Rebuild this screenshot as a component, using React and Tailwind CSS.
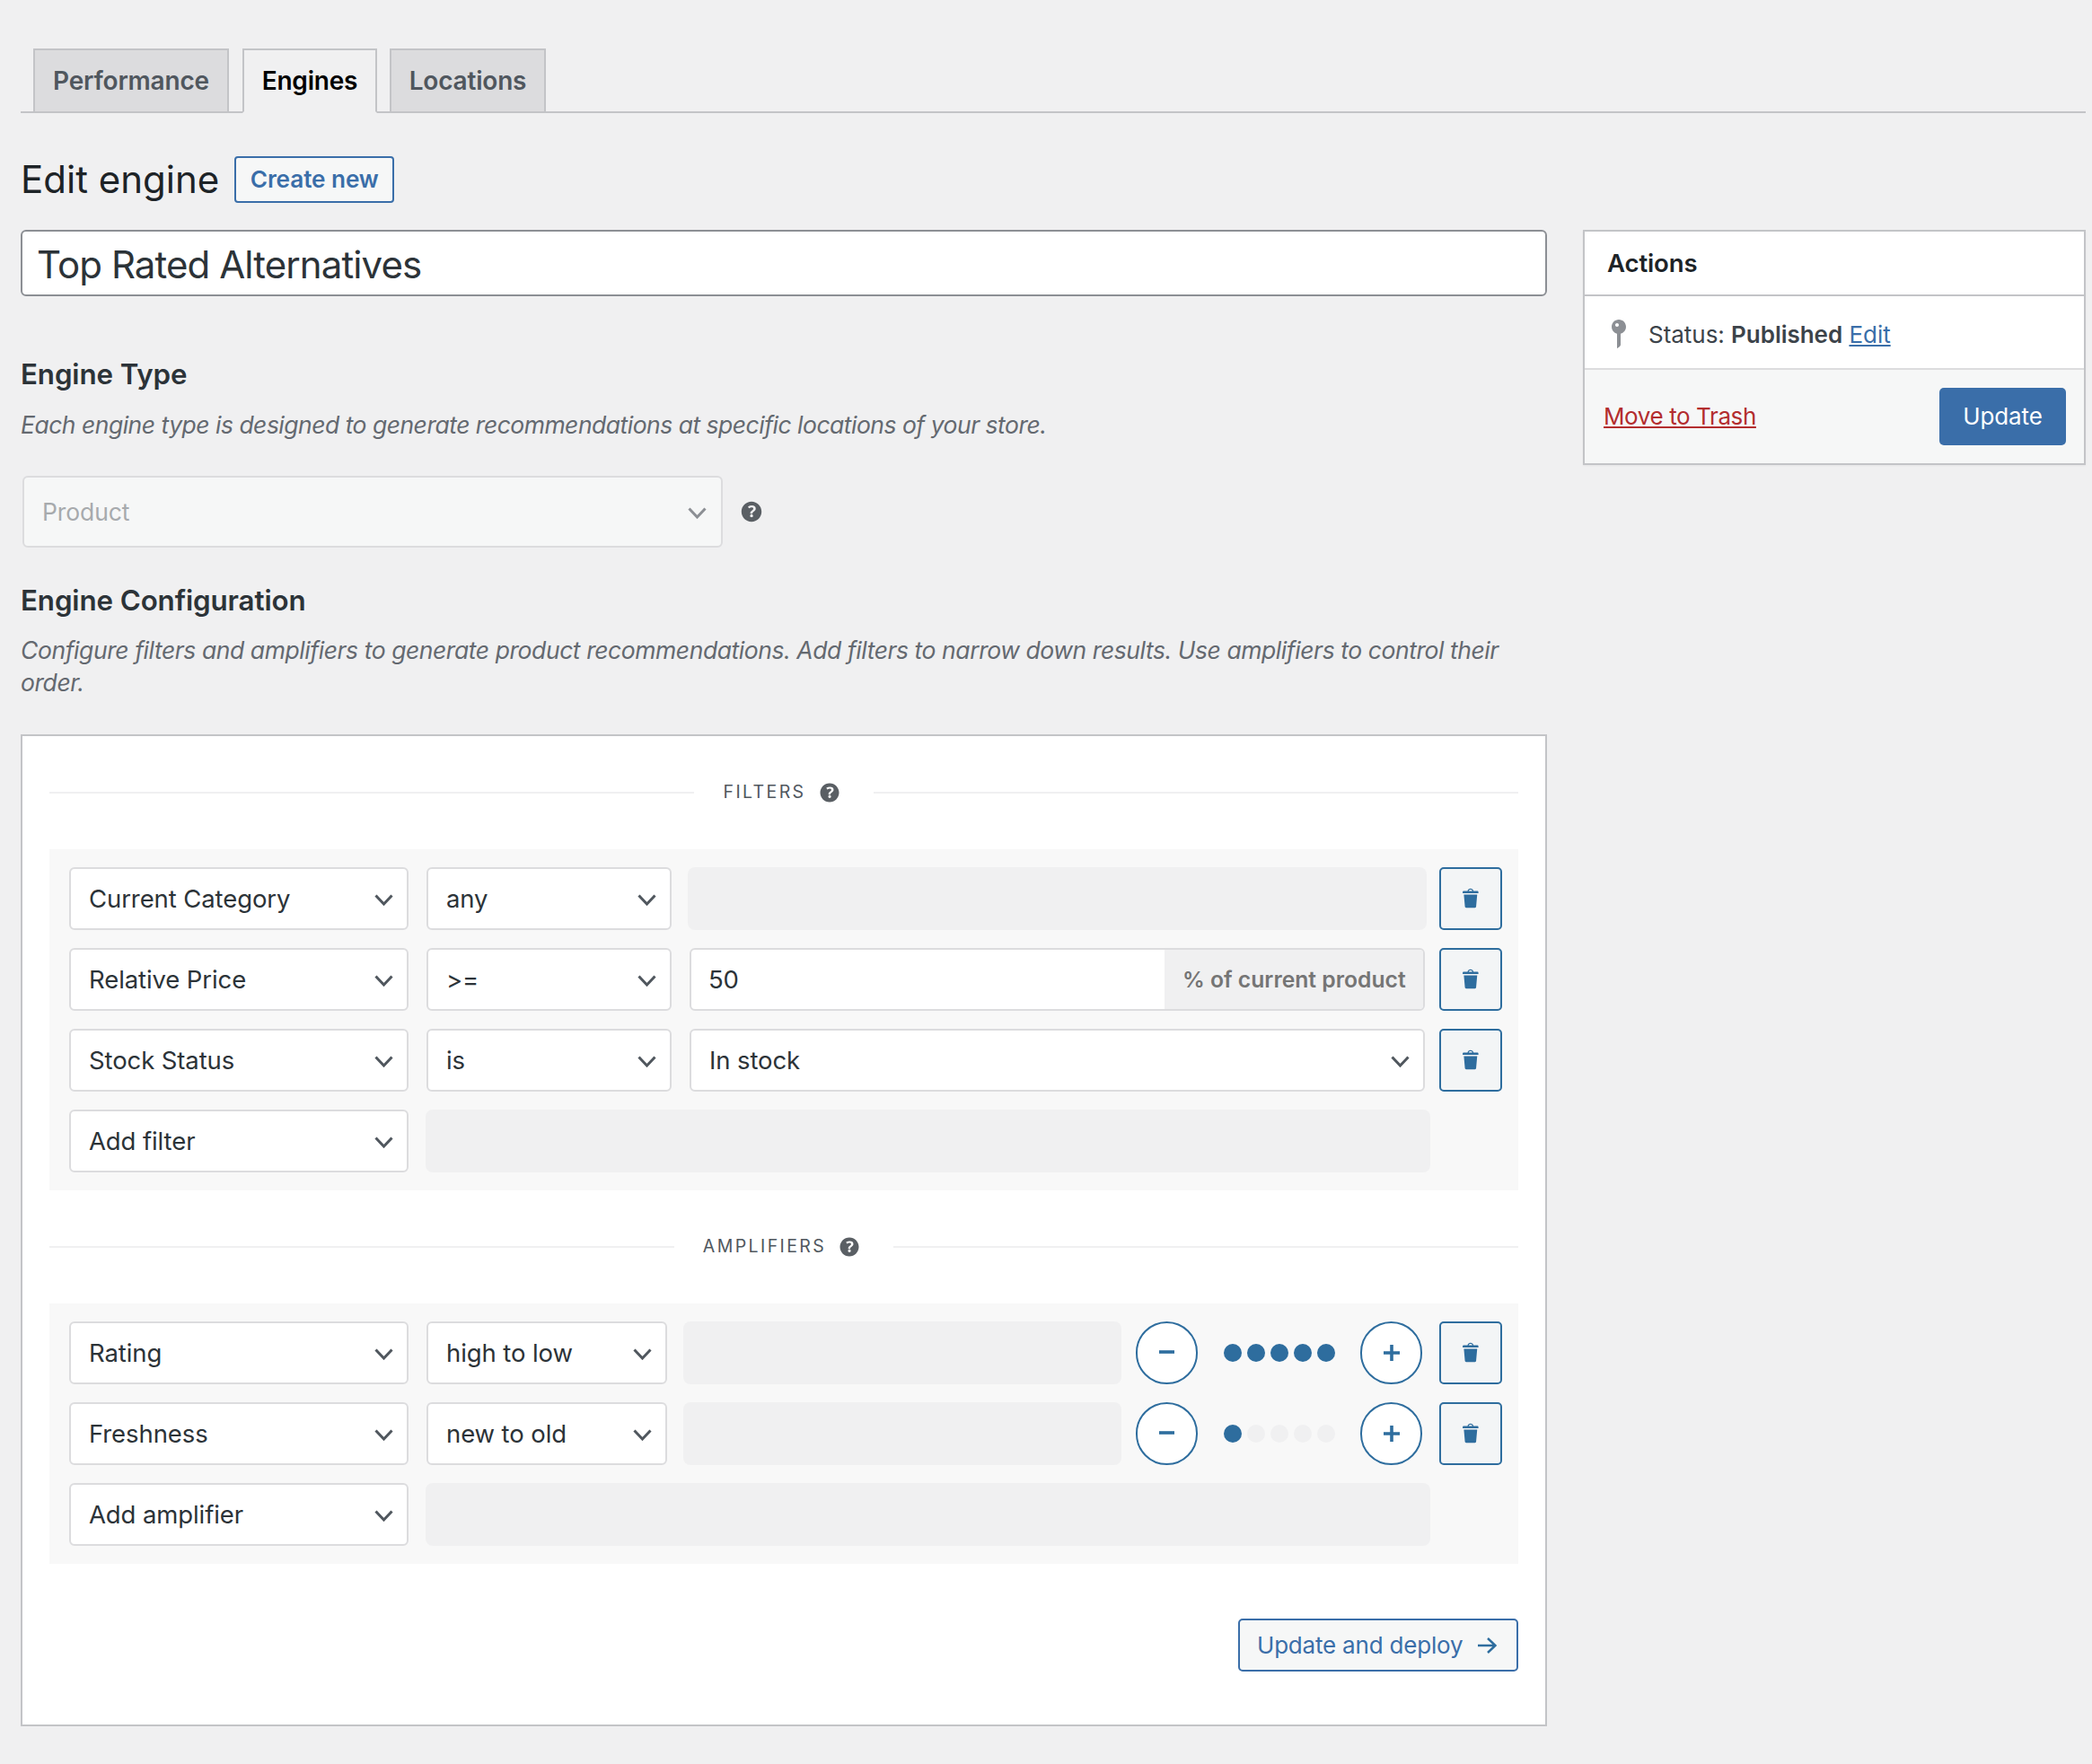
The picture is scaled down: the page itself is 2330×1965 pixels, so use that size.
import React from "react";

const Chevron = ({ c = "" }) => (
  <svg viewBox="0 0 21 13" className={`w-[21px] h-[13px] mt-[3px] shrink-0 ${c}`} fill="none" stroke="#50575e" strokeWidth="3">
    <path d="M1.5 1.5 L10.5 11 L19.5 1.5" />
  </svg>
);
const Trash = () => (
  <svg viewBox="0 0 20 20" className="w-[27px] h-[27px] -mt-[1px]" fill="#2e6d9e">
    <path d="M12 4h3c.6 0 1 .4 1 1v1H3V5c0-.6.5-1 1-1h3c.2-1.1 1.3-2 2.5-2s2.3.9 2.5 2zM8 4h3c-.2-.6-.9-1-1.500-1S8.200 3.400 8 4zM4 7h11l-.9 10.100c0 .5-.5.9-1 .9H5.900c-.5 0-.9-.4-1-.9L4 7z" />
  </svg>
);
const Help = ({ c }) => (
  <svg viewBox="0 0 20 20" className={c} fill="#5a5f64" fillRule="evenodd">
    <path d="M17 10c0-3.870-3.140-7-7-7-3.870 0-7 3.130-7 7 0 3.860 3.130 7 7 7 3.860 0 7-3.140 7-7zm-6.300 1.480H9.140v-.43c0-.38.080-.7.240-.98s.46-.57.880-.89c.41-.29.680-.53.810-.71.140-.18.200-.39.200-.62 0-.25-.090-.44-.280-.58-.19-.13-.45-.19-.790-.19-.58 0-1.250.19-2 .57l-.640-1.280c.870-.49 1.800-.74 2.770-.74.810 0 1.450.2 1.920.58.480.39.710.91.710 1.550 0 .43-.090.8-.290 1.110-.19.320-.57.670-1.110 1.060-.38.280-.61.490-.71.630-.100.150-.15.340-.15.580v.34zm-1.420 2.190c-.19-.18-.28-.43-.28-.73 0-.32.090-.56.270-.73.180-.17.440-.26.780-.26.320 0 .57.090.75.260s.27.410.27.730c0 .3-.09.550-.27.730-.18.190-.43.280-.75.280-.33 0-.58-.09-.770-.28z" />
  </svg>
);
const Sel = ({ w, children }) => (
  <div className={`${w} h-[70px] shrink-0 flex items-center justify-between pl-[20px] pr-[15px] bg-white border-2 border-[#dcdcde] rounded-[6px] text-[#2c3338]`}>
    <span className="pt-[1px]">{children}</span>
    <Chevron />
  </div>
);
const Empty = ({ w }) => <div className={`${w} h-[70px] shrink-0 bg-[#f0f0f1] rounded-[8px]`} />;
const Del = () => (
  <button className="w-[70px] h-[70px] shrink-0 flex items-center justify-center bg-[#f3f5f6] border-2 border-[#2e6d9e] rounded-[5px]">
    <Trash />
  </button>
);
const Circle = ({ plus }) => (
  <button className="w-[69px] h-[70px] shrink-0 flex items-center justify-center bg-white border-2 border-[#2e6d9e] rounded-full">
    <svg viewBox="0 0 18 18" className="w-[18px] h-[18px]" stroke="#2e6d9e" strokeWidth="3.600">
      <path d={plus ? "M0 9H18M9 0V18" : "M0 8H17"} />
    </svg>
  </button>
);
const Dots = ({ n }) => (
  <div className="w-[124px] flex gap-[6px] shrink-0">
    {[0, 1, 2, 3, 4].map((i) => (
      <div key={i} className={`w-[20px] h-[20px] rounded-full ${i < n ? "bg-[#2e6d9e]" : "bg-[#f0f0f1]"}`} />
    ))}
  </div>
);
const Divider = ({ label }) => (
  <div className="flex items-center h-[30px]">
    <div className="flex-1 h-[2px] bg-[#f0f0f1]" />
    <div className="flex items-center gap-[11px] pl-[32px] pr-[34px] text-[19.5px] tracking-[2.4px] text-[#50575e]">
      {label}
      <Help c="w-[30px] h-[30px]" />
    </div>
    <div className="flex-1 h-[2px] bg-[#f0f0f1]" />
  </div>
);
const Tab = ({ active, children, w }) => (
  <div className={`${w} h-[72px] -mb-[2px] flex items-center justify-center border-2 font-semibold text-[28px] tracking-[-0.2px] ${active ? "bg-[#f0f0f1] text-[#000] border-[#c3c4c7] border-b-[#f0f0f1]" : "bg-[#dcdcde] text-[#50575e] border-[#c3c4c7]"}`}>
    {children}
  </div>
);

export default function App() {
  return (
    <div className="min-h-[1965px] bg-[#f0f0f1] pt-[54px] pl-[23px] pr-[7px] text-[27.5px] tracking-[-0.1px] text-[#2c3338] font-['Inter',sans-serif]">
      <div className="flex pl-[14px] border-b-2 border-[#c3c4c7]">
        <Tab w="w-[218px] mr-[15px]">Performance</Tab>
        <Tab w="w-[150px] mr-[14px]" active>Engines</Tab>
        <Tab w="w-[174px]">Locations</Tab>
      </div>

      <div className="flex items-center gap-[17px] mt-[48px] h-[52px]">
        <h1 className="text-[42px] leading-none tracking-normal text-[#1d2327] font-normal">Edit engine</h1>
        <button className="w-[178px] h-[52px] flex items-center justify-center bg-[#f6f7f7] border-2 border-[#3a6ea9] rounded-[4px] text-[#3a6ea9] font-semibold text-[26.2px]">Create new</button>
      </div>

      <div className="flex gap-[40px] mt-[30px] items-start">
        <div className="w-[1700px] shrink-0">
          <div className="h-[74px] flex items-center pt-[2px] px-[16px] bg-white border-2 border-[#8c8f94] rounded-[6px] text-[42px] tracking-[-0.9px] text-[#2c3338]">Top Rated Alternatives</div>

          <h2 className="mt-[69px] h-[36px] leading-[36px] text-[31.3px] font-semibold text-[#2c3338]">Engine Type</h2>
          <p className="mt-[20px] h-[36px] leading-[36px] italic text-[26.5px] tracking-[-0.5px] text-[#646970]">Each engine type is designed to generate recommendations at specific locations of your store.</p>

          <div className="flex items-center gap-[22px] mt-[39px] ml-[2px]">
            <div className="w-[780px] h-[80px] flex items-center justify-between pl-[20px] pr-[16px] bg-[#f6f7f7] border-2 border-[#dcdcde] rounded-[6px] text-[26.5px] text-[#a7aaad]">
              <span className="pt-[1px]">Product</span>
              <svg viewBox="0 0 21 13" className="w-[21px] h-[13px] mt-[2px]" fill="none" stroke="#8c8f94" strokeWidth="3"><path d="M1.500 1.500 L10.500 11 L19.500 1.500" /></svg>
            </div>
            <Help c="w-[32px] h-[32px] -ml-[6px]" />
          </div>

          <h2 className="mt-[41px] h-[36px] leading-[36px] text-[31.3px] font-semibold text-[#2c3338]">Engine Configuration</h2>
          <p className="mt-[19px] leading-[36px] italic text-[26.5px] tracking-[-0.43px] text-[#646970]">Configure filters and amplifiers to generate product recommendations. Add filters to narrow down results. Use amplifiers to control their order.</p>

          <div className="mt-[40px] h-[1105px] bg-white border-2 border-[#c3c4c7] px-[30px] pt-[48px]">
            <Divider label="FILTERS" />
            <div className="mt-[48px] bg-[#f8f8f8] py-[20px] pl-[22px] flex flex-col gap-[20px]">
              <div className="flex items-center">
                <Sel w="w-[378px]">Current Category</Sel>
                <div className="ml-[20px]"><Sel w="w-[273px]">any</Sel></div>
                <div className="ml-[18px]"><Empty w="w-[823px]" /></div>
                <div className="ml-[14px]"><Del /></div>
              </div>
              <div className="flex items-center">
                <Sel w="w-[378px]">Relative Price</Sel>
                <div className="ml-[20px]"><Sel w="w-[273px]">&gt;=</Sel></div>
                <div className="ml-[20px] w-[819px] h-[70px] flex bg-white border-2 border-[#dcdcde] rounded-[6px] overflow-hidden">
                  <div className="flex-1 flex items-center pl-[19px] pt-[1px]">50</div>
                  <div className="w-[288px] flex items-center pl-[20px] pt-[1px] bg-[#f0f0f1] text-[#757575] font-semibold text-[24.7px] tracking-normal">% of current product</div>
                </div>
                <div className="ml-[16px]"><Del /></div>
              </div>
              <div className="flex items-center">
                <Sel w="w-[378px]">Stock Status</Sel>
                <div className="ml-[20px]"><Sel w="w-[273px]">is</Sel></div>
                <div className="ml-[20px]"><Sel w="w-[819px]">In stock</Sel></div>
                <div className="ml-[16px]"><Del /></div>
              </div>
              <div className="flex items-center">
                <Sel w="w-[378px]">Add filter</Sel>
                <div className="ml-[19px]"><Empty w="w-[1119px]" /></div>
              </div>
            </div>

            <div className="mt-[48px]"><Divider label="AMPLIFIERS" /></div>

            <div className="mt-[48px] bg-[#f8f8f8] py-[20px] pl-[22px] flex flex-col gap-[20px]">
              {[["Rating", "high to low", 5], ["Freshness", "new to old", 1]].map(([a, b, n]) => (
                <div key={a} className="flex items-center">
                  <Sel w="w-[378px]">{a}</Sel>
                  <div className="ml-[20px]"><Sel w="w-[268px]">{b}</Sel></div>
                  <div className="ml-[18px]"><Empty w="w-[488px]" /></div>
                  <div className="ml-[16px]"><Circle /></div>
                  <div className="ml-[29px]"><Dots n={n} /></div>
                  <div className="ml-[28px]"><Circle plus /></div>
                  <div className="ml-[19px]"><Del /></div>
                </div>
              ))}
              <div className="flex items-center">
                <Sel w="w-[378px]">Add amplifier</Sel>
                <div className="ml-[19px]"><Empty w="w-[1119px]" /></div>
              </div>
            </div>

            <div className="flex justify-end mt-[61px]">
              <button className="w-[312px] h-[59px] flex items-center justify-between pl-[19px] pr-[22px] bg-[#f6f7f7] border-2 border-[#3a6ea9] rounded-[5px] text-[#3a6ea9] text-[26px] tracking-[-0.2px]">
                Update and deploy
                <svg viewBox="0 0 21 18" className="w-[21px] h-[18px]" fill="none" stroke="#2e6d9e" strokeWidth="2.500"><path d="M0 9H19M11 1L19.500 9L11 17" /></svg>
              </button>
            </div>
          </div>
        </div>

        <div className="w-[560px] h-[262px] shrink-0 bg-white border-2 border-[#c3c4c7] shadow-[0_1px_2px_rgba(0,0,0,0.05)] flex flex-col text-[26px]">
          <div className="h-[72px] flex items-center pl-[25px] pt-[2px] border-b-2 border-[#c3c4c7] font-semibold text-[27.5px] text-[#1d2327]">Actions</div>
          <div className="h-[82px] flex items-center pt-[4px] border-b-2 border-[#dcdcde]">
            <svg viewBox="0 0 20 20" className="w-[40px] h-[40px] ml-[18px] mr-[13px] shrink-0" fill="#8c8f94" fillRule="evenodd">
              <path d="M14 6c0 1.860-1.280 3.410-3 3.860V16c0 1-2 2-2 2V9.860c-1.720-.45-3-2-3-3.860 0-2.210 1.790-4 4-4s4 1.790 4 4zM8 5c0 .55.45 1 1 1s1-.45 1-1-.45-1-1-1-1 .45-1 1z" />
            </svg>
            <span className="text-[#3c434a] tracking-[-0.03px]">Status: <b className="font-semibold">Published</b> <a className="text-[#3a6ea9] underline">Edit</a></span>
          </div>
          <div className="flex-1 flex items-center justify-between pl-[21px] pr-[20px] pb-[1px] bg-[#f6f7f7]">
            <a className="text-[#b32d2e] underline tracking-[-0.4px]">Move to Trash</a>
            <button className="w-[141px] h-[64px] bg-[#3a6ea9] text-white rounded-[5px]">Update</button>
          </div>
        </div>
      </div>
    </div>
  );
}
